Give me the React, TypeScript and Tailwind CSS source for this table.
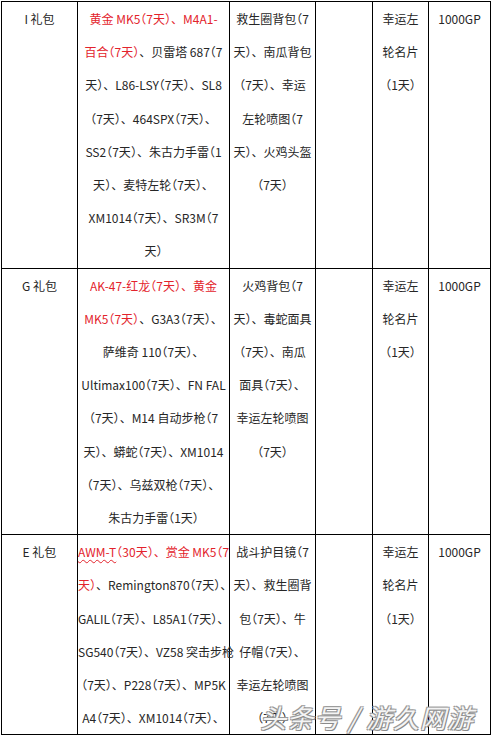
import React from 'react'

type Seg = { t: string; red?: boolean; wavy?: boolean }
type Line = string | Seg[]

type Pack = {
  name: string
  items: Line[]
  extras: Line[]
}

const packs: Pack[] = [
  {
    name: 'I 礼包',
    items: [
      [{ t: '黄金 MK5（7天）、M4A1-', red: true }],
      [{ t: '百合（7天）', red: true }, { t: '、贝雷塔 687（7' }],
      '天）、L86-LSY（7天）、SL8',
      '（7天）、464SPX（7天）、',
      'SS2（7天）、朱古力手雷（1',
      '天）、麦特左轮（7天）、',
      'XM1014（7天）、SR3M（7',
      '天）',
    ],
    extras: ['救生圈背包（7', '天）、南瓜背包', '（7天）、幸运', '左轮喷图（7', '天）、火鸡头盔', '（7天）'],
  },
  {
    name: 'G 礼包',
    items: [
      [{ t: 'AK-47-红龙（7天）、黄金', red: true }],
      [{ t: 'MK5（7天）', red: true }, { t: '、G3A3（7天）、' }],
      '萨维奇 110（7天）、',
      'Ultimax100（7天）、FN FAL',
      '（7天）、M14 自动步枪（7',
      '天）、蟒蛇（7天）、XM1014',
      '（7天）、乌兹双枪（7天）、',
      '朱古力手雷（1天）',
    ],
    extras: ['火鸡背包（7', '天）、毒蛇面具', '（7天）、南瓜', '面具（7天）、', '幸运左轮喷图', '（7天）'],
  },
  {
    name: 'E 礼包',
    items: [
      [{ t: 'AWM-T', red: true, wavy: true }, { t: '（30天）、赏金 MK5（7', red: true }],
      [{ t: '天）', red: true }, { t: '、Remington870（7天）、' }],
      'GALIL（7天）、L85A1（7天）、',
      'SG540（7天）、VZ58 突击步枪',
      '（7天）、P228（7天）、MP5K',
      'A4（7天）、XM1014（7天）、',
    ],
    extras: ['战斗护目镜（7', '天）、救生圈背', '包（7天）、牛', '仔帽（7天）、', '幸运左轮喷图', '（7天）'],
  },
]

const lucky = ['幸运左', '轮名片', '（1天）']

// full-width brackets sit tighter in the source doc -> half-width alternates
function Text({ s }: { s: string }) {
  return (
    <>
      {s.split(/([（）])/).map((part, i) =>
        part === '（' || part === '）' ? (
          <span key={i} className="[font-feature-settings:'halt']">
            {part}
          </span>
        ) : (
          part
        ),
      )}
    </>
  )
}

function Lines({ lines }: { lines: Line[] }) {
  return (
    <>
      {lines.map((l, i) => (
        <div key={i} className="whitespace-nowrap">
          {typeof l === 'string' ? (
            <Text s={l} />
          ) : (
            l.map((s, j) => (
              <span
                key={j}
                className={`${s.red ? 'text-[#e3232c]' : ''} ${
                  s.wavy ? 'underline decoration-wavy decoration-[#e3232c] underline-offset-2 decoration-1' : ''
                }`}
              >
                <Text s={s.t} />
              </span>
            ))
          )}
        </div>
      ))}
    </>
  )
}

export default function App() {
  return (
    <div className="relative h-[736px] w-[492px] overflow-hidden bg-white pl-px pt-px font-['Noto_Sans_CJK_SC',sans-serif] text-[12px] leading-[33.2px] text-[#262626]">
      <div className="grid w-[490px] grid-cols-[76px_152px_86px_57px_56px_62px] border-l border-t border-black">
        {packs.map((p) => (
          <React.Fragment key={p.name}>
            <div className="border-b border-r border-black text-center">{p.name}</div>
            <div className="border-b border-r border-black text-center">
              <Lines lines={p.items} />
            </div>
            <div className="border-b border-r border-black text-center">
              <Lines lines={p.extras} />
            </div>
            <div className="border-b border-r border-black" />
            <div className="border-b border-r border-black text-center">
              <Lines lines={lucky} />
            </div>
            <div className="border-b border-r border-black text-center">1000GP</div>
          </React.Fragment>
        ))}
      </div>

      {/* watermark */}
      <div className="pointer-events-none absolute bottom-[6px] right-[18px] whitespace-nowrap font-['Noto_Sans_CJK_SC',sans-serif] text-[26px] italic leading-none tracking-[1px] text-[#f4f4f4] [text-shadow:1px_1px_0_#8a8a8a,-1px_-1px_0_#9a9a9a,1px_-1px_0_#9a9a9a,-1px_1px_0_#9a9a9a]">
        头条号 / 游久网游
      </div>
    </div>
  )
}
